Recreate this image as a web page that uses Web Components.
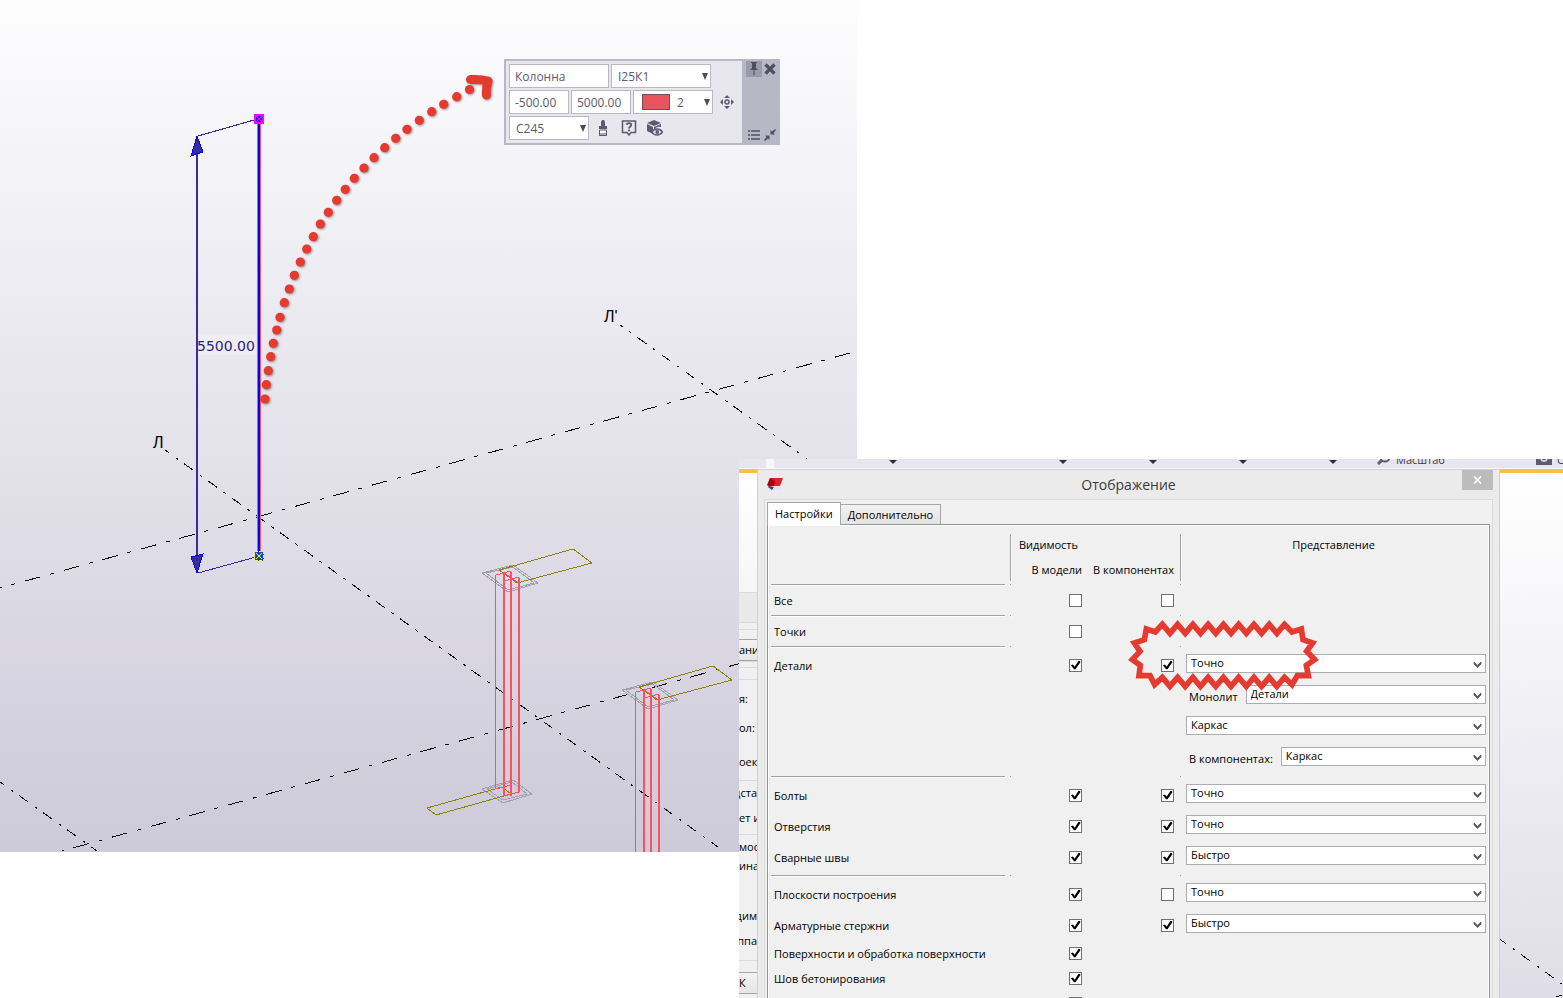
<!DOCTYPE html>
<html lang="ru">
<head>
<meta charset="utf-8">
<title>Отображение</title>
<style>
html,body{margin:0;height:100%;background:#fff}
body{font-family:"Open Sans","Noto Sans",sans-serif;font-size:11px;line-height:16px;color:#000}
</style>
</head>
<body>
<app-stage>
  <model-view slot="model"><mini-toolbar></mini-toolbar></model-view>
  <app-window slot="window">
    <display-dialog heading="Отображение"></display-dialog>
  </app-window>
</app-stage>

<script>
const define = (name, html, setup) => {
  const tpl = document.createElement('template');
  tpl.innerHTML = html;
  customElements.define(name, class extends HTMLElement {
    constructor() {
      super();
      this.attachShadow({ mode: 'open' }).append(tpl.content.cloneNode(true));
    }
    connectedCallback() {
      if (setup && !this.ready) { this.ready = true; setup(this, this.shadowRoot); }
    }
  });
};

/* ---- controls ---- */
define('combo-box', `
<style>
:host{display:grid;flex:1;height:19px;min-width:0}
select,svg{grid-area:1/1}
select{appearance:none;box-sizing:border-box;width:100%;height:19px;margin:0;padding:0 20px 2px 4px;border:1px solid #abadb3;border-radius:0;background:#fff;font:inherit;line-height:16px;color:#000}
svg{justify-self:end;align-self:center;margin:2px 4px 0 0;pointer-events:none}
</style>
<select></select>
<svg width="9" height="7" viewBox="0 0 9 7"><path d="M1 1v2l3.500 3.500L8 3V1L4.500 4.300z" fill="#5a5a5a" stroke="#5a5a5a" stroke-width=".8"/></svg>`,
(el, root) => {
  const s = root.querySelector('select');
  s.setAttribute('aria-label', el.getAttribute('label') || 'Представление');
  const value = el.getAttribute('value');
  for (const v of new Set([value, 'Точно', 'Быстро', 'Каркас'])) s.add(new Option(v));
});

define('setting-row', `
<style>
:host{display:grid;grid-template-columns:239px 72px 98px 1fr;align-items:start}
.check{height:23px;display:flex;align-items:center;justify-content:flex-end}
.comp{padding-right:6px}
label{padding-left:3px;height:23px;line-height:24px;white-space:nowrap}
input{appearance:none;width:13px;height:13px;margin:0;border:1px solid #707070;box-sizing:border-box;background:#fff;display:grid}
input:checked::before{content:"";width:11px;height:11px;background:#000;clip-path:polygon(9% 48%,27% 42%,42% 62%,76% 10%,92% 10%,94% 20%,50% 84%,36% 84%)}
.rep{padding-left:6px;display:flex;flex-direction:column;gap:12px;min-width:0}
</style>
<label for="model"></label>
<span class="check"><input type="checkbox" id="model"></span>
<span class="check comp"><input type="checkbox" id="comp" aria-label="В компонентах"></span>
<div class="rep"><slot></slot></div>`,
(el, root) => {
  root.querySelector('label').textContent = el.getAttribute('label');
  root.querySelector('#model').checked = el.getAttribute('model') === 'on';
  const comp = root.querySelector('#comp');
  if (el.hasAttribute('comp')) comp.checked = el.getAttribute('comp') === 'on';
  else comp.remove();
});

define('setting-group', `
<style>
:host{display:flex;flex-direction:column;gap:8px;padding:6px 0;position:relative}
:host([compact]){padding:3px 0}
:host([stacked]){padding-bottom:10px}
:host([joined]){padding-bottom:5px}
:host([tight]){gap:2px;padding:0}
</style><slot></slot>`);

define('etched-line', `
<style>
:host{display:grid;grid-template-columns:234px 5px 1px 169px 1px;height:1px;padding-bottom:1px}
i{height:1px;background:#a0a0a0;box-shadow:0 1px #fff}
i:nth-of-type(n+2){box-shadow:1px 1px #fff}
i:nth-of-type(2){grid-column:3}i:nth-of-type(3){grid-column:5}
</style><i></i><i></i><i></i>`);

/* ---- dialog ---- */
define('star-burst', `
<style>:host{position:absolute;left:349px;top:-36px;pointer-events:none;line-height:0}</style>
<svg width="210" height="90" viewBox="0 0 630 270"><path fill="none" stroke="#e53a2f" stroke-width="17"/></svg>`,
(el, root) => {
  const top = [], bottom = [];
  for (let i = 0; i < 9; i++) {
    const x = 127 + i * 45.8;
    top.push([x, 37]);
    if (i < 8) top.push([x + 23, 64]);
  }
  for (let i = 8; i >= 0; i--) {
    const x = 127 + i * 45.8;
    bottom.push([x, 196]);
    if (i > 0) bottom.push([x - 23, 223]);
  }
  const pts = [[79,51],[106,60],...top,[516,60],[544,51],[549,83],[578,93],[560,118],[584,143],[559,160],[565,191],
    [532,191],[516,218],...bottom,[104,218],[90,191],[57,191],[61,160],[37,143],[60,118],[43,93],[73,83]];
  root.querySelector('path').setAttribute('d', 'M' + pts.map(p => p.join(' ')).join('L') + 'Z');
});

define('display-dialog', `
<style>
:host{display:flex;flex-direction:column;box-sizing:border-box;background:#ebebeb;border:1px solid #d0d0d0;border-bottom:0;padding:0 6px;min-width:0}
header{display:grid;grid-template-columns:31px 1fr 31px;height:29px;flex:none}
.logo{margin:8px 0 0 3px}
h1{margin:0;font-size:14px;font-weight:400;line-height:30px;text-align:center;color:#3b3b3b}
.close{width:31px;height:20px;border:0;padding:0;background:#bcbcbc;display:grid;place-items:center}
.client{flex:1;background:#f0f0f0;border:1px solid #dadada;border-bottom:0;padding:2px 2px 0;display:flex;flex-direction:column;min-height:0}
.tabs{display:flex;align-items:flex-end;height:22px;flex:none}
.tabs button{font:inherit;line-height:20px;height:20px;box-sizing:border-box;padding:0 7px;border:1px solid #a5a8a8;border-bottom:0;background:linear-gradient(#f2f2f2,#e3e3e3);border-left:0;white-space:nowrap;color:#000}
.tabs button.on{height:23px;margin-bottom:-1px;background:#fff;border-left:1px solid #a5a8a8;z-index:1}
.panel{flex:1;border:1px solid #8b9898;border-bottom:0;box-shadow:inset 1px 1px #fff,inset -1px 0 #fff;padding:9px 3px 0;min-height:0}
.head{display:grid;grid-template-columns:239px 170px 1fr;height:45px;padding-bottom:5px}
.head>div{border-left:1px solid #a0a0a0;box-shadow:inset 1px 0 #fff}
.vis{display:grid;grid-template-columns:71px 92px;grid-template-rows:22px 22px;text-align:right;align-items:center;white-space:nowrap;row-gap:3px}
.vis b{grid-column:1/3;text-align:left;padding-left:8px}
b{font-weight:400}
.rep{text-align:center;line-height:22px}
.line{display:flex;gap:8px;height:23px;align-items:center;margin-bottom:-4px;white-space:nowrap;padding-left:3px}
.line combo-box{align-self:flex-start}
</style>
<header>
  <svg class="logo" width="18" height="14" viewBox="0 0 18 14"><path d="M3 0h13l-3 8H1z" fill="#d8242f"/><path d="M3 0l5 3-1 5-5 1-2-2z" fill="#a3070d"/><path d="M1 9h6l-2 3z" fill="#104a94"/><path d="M7 9h8l-1 3H6z" fill="#e3e3f3"/></svg>
  <h1></h1>
  <button class="close" aria-label="Закрыть"><svg width="9" height="8" viewBox="0 0 9 8"><path d="M1 .5l7 7M8 .5l-7 7" stroke="#fff" stroke-width="1.700"/></svg></button>
</header>
<div class="client">
  <div class="tabs" role="tablist"><button class="on" role="tab" aria-selected="true">Настройки</button><button role="tab">Дополнительно</button></div>
  <div class="panel">
    <div class="head"><span></span>
      <div class="vis"><b>Видимость</b><span>В модели</span><span>В компонентах</span></div>
      <div class="rep">Представление</div></div>
    <etched-line></etched-line>
    <setting-group compact><setting-row label="Все" comp="off"></setting-row></setting-group>
    <etched-line></etched-line>
    <setting-group compact><setting-row label="Точки"></setting-row></setting-group>
    <etched-line></etched-line>
    <setting-group stacked>
      <setting-row label="Детали" model="on" comp="on">
        <combo-box value="Точно" style="flex:none"></combo-box>
        <div class="line"><span>Монолит</span><combo-box value="Детали" label="Монолит"></combo-box></div>
        <combo-box value="Каркас" style="flex:none"></combo-box>
        <div class="line"><span>В компонентах:</span><combo-box value="Каркас" label="В компонентах"></combo-box></div>
      </setting-row>
      <star-burst></star-burst>
    </setting-group>
    <etched-line></etched-line>
    <setting-group>
      <setting-row label="Болты" model="on" comp="on"><combo-box value="Точно"></combo-box></setting-row>
      <setting-row label="Отверстия" model="on" comp="on"><combo-box value="Точно"></combo-box></setting-row>
      <setting-row label="Сварные швы" model="on" comp="on"><combo-box value="Быстро"></combo-box></setting-row>
    </setting-group>
    <etched-line></etched-line>
    <setting-group joined>
      <setting-row label="Плоскости построения" model="on" comp="off"><combo-box value="Точно"></combo-box></setting-row>
      <setting-row label="Арматурные стержни" model="on" comp="on"><combo-box value="Быстро"></combo-box></setting-row>
    </setting-group>
    <setting-group tight>
      <setting-row label="Поверхности и обработка поверхности" model="on"></setting-row>
      <setting-row label="Шов бетонирования" model="on"></setting-row>
      <setting-row label=""></setting-row>
    </setting-group>
  </div>
</div>`,
(el, root) => { root.querySelector('h1').textContent = el.getAttribute('heading'); });

/* ---- application behind the dialog ---- */
define('ribbon-strip', `
<style>
:host{display:flex;align-items:flex-end;height:9px;overflow:hidden;background:#e7e6ee;border-bottom:1px solid #fafafc;color:#3c3a4c}
.gap,i,svg,span{flex:none}
.gap{width:8px;height:9px;background:#f8f8fb;margin-left:27px}
i{border:4px solid transparent;border-top-color:#2f2d3d;border-bottom:0;margin-bottom:4px;box-sizing:border-box;width:8px;height:4px}
.c1{margin-left:115px}.c2{margin-left:162px}.c3{margin-left:82px}
svg{margin-bottom:3px}
.mag{margin-left:40px}
span{line-height:16px;white-space:nowrap;margin-left:5px}
.cam{margin-left:91px}
</style>
<div class="gap"></div><i class="c1"></i><i class="c2"></i><i class="c3"></i><i class="c3"></i><i class="c3"></i>
<svg class="mag" width="14" height="14" viewBox="0 0 14 14"><circle cx="8" cy="6" r="4.500" fill="none" stroke="#5c5a6e" stroke-width="2"/><path d="M5 9l-4 4" stroke="#5c5a6e" stroke-width="3"/></svg>
<span>Масштаб</span>
<svg class="cam" width="16" height="12" viewBox="0 0 16 12"><path d="M0 0h16v12H0z" fill="#5c5a6e"/><circle cx="8" cy="5" r="3" fill="none" stroke="#e7e6ee" stroke-width="1.500"/></svg>
<span>С</span>`);

define('side-panel', `
<style>
:host{display:grid;grid-template-rows:119px 30px 7px 10px 22px 6px 12px 101px 54px 126px 12px 22px 1fr;box-sizing:border-box;border-top:4px solid #ffbe4b;overflow:hidden;background:#f0f0f0;white-space:nowrap;min-width:0}
.sky{background:linear-gradient(#fff,#f6f6f9)}
.bar{background:#e9e9e9}
div,button{box-sizing:border-box;border:0 solid #dadada;border-top-width:1px;min-width:0}
.sky{border:0}
button{font:inherit;padding:0;border:solid #a5a5a5;border-width:1px 0;background:linear-gradient(#f2f2f2,#e6e6e6);text-align:left;line-height:20px;height:22px;color:#000}
div{display:grid;grid-template-columns:100%;align-content:start}
.end{justify-self:end}
.a{padding-top:11px;grid-template-rows:29px 34px 16px}
.b{padding-top:4px;grid-template-rows:25px 16px}
.c{padding-top:4px;grid-template-rows:19px 50px 25px 16px}
</style>
<div class="sky"></div><div class="bar"></div><div></div><div></div><button>ани</button><div></div><div></div>
<div class="a"><span>я:</span><span>ол:</span><span>оек</span></div>
<div class="b"><span class="end">дста</span><span>ет и</span></div>
<div class="c"><span>мос</span><span>ина</span><span class="end">дим</span><span class="end">уппа</span></div>
<div></div><button>К</button>`);

define('side-view', `
<style>
:host{display:block;box-sizing:border-box;border-top:4px solid #ffbe4b;background:linear-gradient(#fff,#dfdde7);overflow:hidden;min-width:0}
svg{display:block;width:100%;height:100%}
</style>
<svg viewBox="0 0 63 525" preserveAspectRatio="xMinYMin slice" fill="none" stroke="#000" shape-rendering="crispEdges"><path d="M-6 462L62 511" stroke-dasharray="11 8 3 7.500" stroke-dashoffset="-4"/><path d="M56 524l6-2"/></svg>`);

define('app-window', `
<style>
:host{display:grid;grid-template:10px minmax(0,1fr)/18px minmax(0,1fr) 63px;overflow:hidden;background:#fff}
ribbon-strip{grid-column:1/4}
::slotted(*){min-height:0}
</style>
<ribbon-strip></ribbon-strip><side-panel></side-panel><slot></slot><side-view></side-view>`);

/* ---- floating property toolbar ---- */
define('mini-toolbar', `
<style>
:host{position:absolute;left:504px;top:59px;display:flex;box-sizing:border-box;width:276px;border:2px solid #b8b7c5;background:#e8e7ee;color:#5c5a6e;font-size:12px}
.rows{flex:1;padding:3px;display:flex;flex-direction:column;gap:2px}
.row{display:flex;gap:2px;height:24px;align-items:center}
input,select{appearance:none;box-sizing:border-box;height:24px;margin:0;border:1px solid #b8b7c5;border-radius:0;background:#fff;font:inherit;color:inherit;padding:0 5px;width:60px;min-width:0}
.pick{display:grid;width:80px}
.pick>*{grid-area:1/1}
.pick select{width:100%;padding:1px 6px 0}
.pick::after{content:"";grid-area:1/1;justify-self:end;align-self:center;border:3px solid transparent;border-top:7px solid #4c4a5c;border-bottom:0;margin-right:3px;pointer-events:none}
.wide{width:100px}
.pick.color select{padding-left:43px}
.swatch{width:28px;height:16px;box-sizing:border-box;border:1px solid #7c4a5a;background:#e8545e;align-self:center;margin-left:9px;pointer-events:none}
button{border:0;background:none;padding:0;width:16px;height:16px;display:grid;place-items:center;color:inherit}
.tools{display:flex;gap:10px;margin-left:4px}
aside{background:#b8b7c5;width:36px;padding:0 0 0 4px;display:grid;grid-template-columns:16px 16px;align-content:space-between;box-sizing:border-box}
.pin{background:#9b9aaa}
</style>
<div class="rows">
  <div class="row"><input aria-label="Имя" value="Колонна" class="wide"><span class="pick wide"><select aria-label="Профиль"><option>I25К1</option></select></span></div>
  <div class="row"><input aria-label="Низ" value="-500.00"><input aria-label="Верх" value="5000.00"><span class="pick color"><select aria-label="Класс"><option>2</option></select><span class="swatch"></span></span>
    <button aria-label="Положение" style="margin-left:4px"><svg width="14" height="14" viewBox="0 0 14 14"><g fill="currentColor"><path d="M7 0l3 3H4zM7 14l3-3H4zM0 7l3-3v6zM14 7l-3-3v6z"/></g><circle cx="7" cy="7" r="2" fill="none" stroke="currentColor" stroke-width="1.500"/></svg></button></div>
  <div class="row"><span class="pick"><select aria-label="Материал"><option>C245</option></select></span>
    <div class="tools">
    <button aria-label="Копировать свойства"><svg width="10" height="16" viewBox="0 0 10 16"><path d="M4 0h2l1 2v4h2v3H1V6h2V2z" fill="currentColor"/><path d="M1.500 10h7v5.500h-7z" fill="#fff" stroke="currentColor"/><path d="M1 13h8v3H1z" fill="currentColor" opacity=".55"/></svg></button>
    <button aria-label="Запрос"><svg width="16" height="16" viewBox="0 0 16 16" fill="none" stroke="currentColor" stroke-width="1.500"><path d="M1.500 1h13v11.500H10L8 15l-2-2.500H1.500z"/><path d="M5.800 4.800C6 2.600 10.200 2.600 10.200 5c0 1.800-2.200 1.600-2.200 3.500M8 9.500v1.700" stroke-width="1.900"/></svg></button>
    <button aria-label="Показать"><svg width="16" height="16" viewBox="0 0 16 16"><path d="M7 0l7 3-7 3-7-3zM0 4l6 3v7l-6-3zM14 4v3c-3-1-5 0-7 3V7z" fill="currentColor"/><path d="M5 12c2-4 8-4 10.500 0-2.500 4-8.500 4-10.500 0z" fill="#e8e7ee" stroke="currentColor" stroke-width="1.500"/><circle cx="10.200" cy="12" r="1.900" fill="currentColor"/></svg></button>
    </div></div>
</div>
<aside>
  <button class="pin" aria-label="Закрепить"><svg width="8" height="14" viewBox="0 0 8 14"><path d="M1 0h6v1H6v5l2 2H4.500v5L4 14l-.5-1V8H0l2-2V1H1z" fill="#4f4d60"/></svg></button>
  <button aria-label="Закрыть"><svg width="12" height="12" viewBox="0 0 12 12"><path d="M1.500 1.500l9 9M10.500 1.500l-9 9" stroke="#4f4d60" stroke-width="3.200"/></svg></button>
  <button aria-label="Список"><svg width="12" height="10" viewBox="0 0 12 10"><path d="M0 1h2m1 0h9M0 5h2m1 0h9M0 9h2m1 0h9" stroke="#4f4d60" stroke-width="1.500"/></svg></button>
  <button aria-label="Свернуть"><svg width="12" height="12" viewBox="0 0 12 12"><path d="M6.500 5.500V1l1.500 1.500L11 0l1 1-2.500 3L11 5.500zM5.500 6.500V11L4 9.500 1 12l-1-1 2.500-3L1 6.500z" fill="#4f4d60"/></svg></button>
</aside>`);

/* ---- 3D model view ---- */
define('model-view', `
<style>
:host{display:block;position:relative;overflow:hidden;background:linear-gradient(#fdfdfe,#e3e1ea 54%,#cdcad9)}
svg{display:block;width:100%;height:100%}
text{font-family:"Liberation Sans",sans-serif}
.dim{font-family:"DejaVu Sans",sans-serif}
</style>
<svg viewBox="0 0 857 852" preserveAspectRatio="xMinYMin slice" fill="none">
  <defs>
    <g id="head"><path d="M482 573l31-8 25 18-30 9zM486 573l27-6 21 16-26 7z" stroke="#a49eb0"/><path d="M499 570l74-21 19 14-75 20z" stroke="#8c8207"/></g>
  </defs>
  <g stroke="#000" shape-rendering="crispEdges">
    <path d="M0 588L850 353" stroke-dasharray="16 10 4 10" stroke-dashoffset="-26"/>
    <path d="M62 851L857 631" stroke-dasharray="16 10 4 10" stroke-dashoffset="-12"/>
    <path d="M165 450L718 847M0 782L97 851" stroke-dasharray="11 8 3 7.500" stroke-dashoffset="6"/>
    <path d="M620 325L810 461" stroke-dasharray="11 8 3 7.500" stroke-dashoffset="8"/>
  </g>
  <g shape-rendering="crispEdges">
    <use href="#head"/>
    <path d="M482 789l31-9 19 14-29 9zM487 789l25-7 15 12-24 6z" stroke="#a49eb0"/>
    <path d="M502 787l-75 21 9 7 75-21z" stroke="#8c8207"/>
    <g stroke="#ff5060"><path d="M495.500 575V789"/><path d="M504 573V796M511 572V796M519 578V792" stroke-width="2"/><path d="M496 575l15-4M504 581l15-4M503 572l14 10M496 789l15-4M504 796l15-4"/></g>
    <g transform="translate(140 117)"><use href="#head"/>
    <g stroke="#ff5060"><path d="M495.500 575V740"/><path d="M504 573V740M511 572V740M519 578V740" stroke-width="2"/><path d="M496 575l15-4M504 581l15-4M503 572l14 10"/></g></g>
    <path d="M198 136l56-16M198 573l58-16" stroke="#3a2d9a"/>
    <path d="M197 140V570" stroke="#3a2d9a" stroke-width="2"/>
    <path d="M197 136l-6 20 12-4zM197 573l-6-16 12-3z" fill="#3a2d9a" stroke="#00f"/>
    <path d="M257 120h4v436h-4z" fill="#ff5560"/><path d="M258 120h2v436h-2z" fill="#00f"/>
    <path d="M255 115h8v8h-8z" fill="#1a1ae0" stroke="#f0f" stroke-width="2"/><path d="M256 116l6 6M262 116l-6 6" stroke="#f0f"/>
    <path d="M254.500 551.500h9v9h-9z" fill="#1040c8" stroke="#ff0" stroke-dasharray="3 1"/><path d="M256 553l6 6M262 553l-6 6" stroke="#ff0"/>
  </g>
  <path d="M198 334h58v21h-58z" fill="#f0f0f5" opacity=".7"/>
  <text class="dim" x="197" y="351" font-size="14" fill="#2d2080">5500.00</text>
  <text x="153" y="448" font-size="16" fill="#000">Л</text><text x="604" y="322" font-size="16" fill="#000">Л'</text>
  <g id="trail" fill="#e53a2f" style="filter:drop-shadow(1px 1px 1px #0006)"><path d="M470.500 79.500Q480 79 488 81Q486 88 486.500 95" fill="none" stroke="#e53a2f" stroke-width="9" stroke-linecap="round" stroke-linejoin="round"/></g>
</svg>
<slot></slot>`,
(el, root) => {
  const dots = [[265,399],[266.3,384.7],[268.3,370.7],[270.7,356.7],[273.3,343.3],[276.7,330],[280,317.3],[284.3,302.7],[289.3,289],[294.3,275.3],[300.3,262],[306.7,249],[313.3,236.7],[320.3,224],[328.3,212.3],[336.7,200.3],[345.3,189.3],[354.3,178.3],[364,168],[374,157.7],[384.7,147.7],[395.7,138.3],[407,129.3],[419.3,120.3],[431.7,111.7],[443.7,104.3],[456.7,96.7],[469.5,89.5]];
  const trail = root.querySelector('#trail');
  for (const [x, y] of dots) {
    const c = document.createElementNS('http://www.w3.org/2000/svg', 'circle');
    c.setAttribute('cx', x); c.setAttribute('cy', y); c.setAttribute('r', 4.6);
    trail.append(c);
  }
});

define('app-stage', `
<style>
:host{display:grid;height:100vh;overflow:hidden;grid-template-columns:739fr 118fr 706fr;grid-template-rows:459px 393px minmax(0,1fr)}
slot[name=model]::slotted(*){grid-area:1/1/3/3}
slot[name=window]::slotted(*){grid-area:2/2/4/4;z-index:1}
</style>
<slot name="model"></slot><slot name="window"></slot>`);
</script>
</body>
</html>
